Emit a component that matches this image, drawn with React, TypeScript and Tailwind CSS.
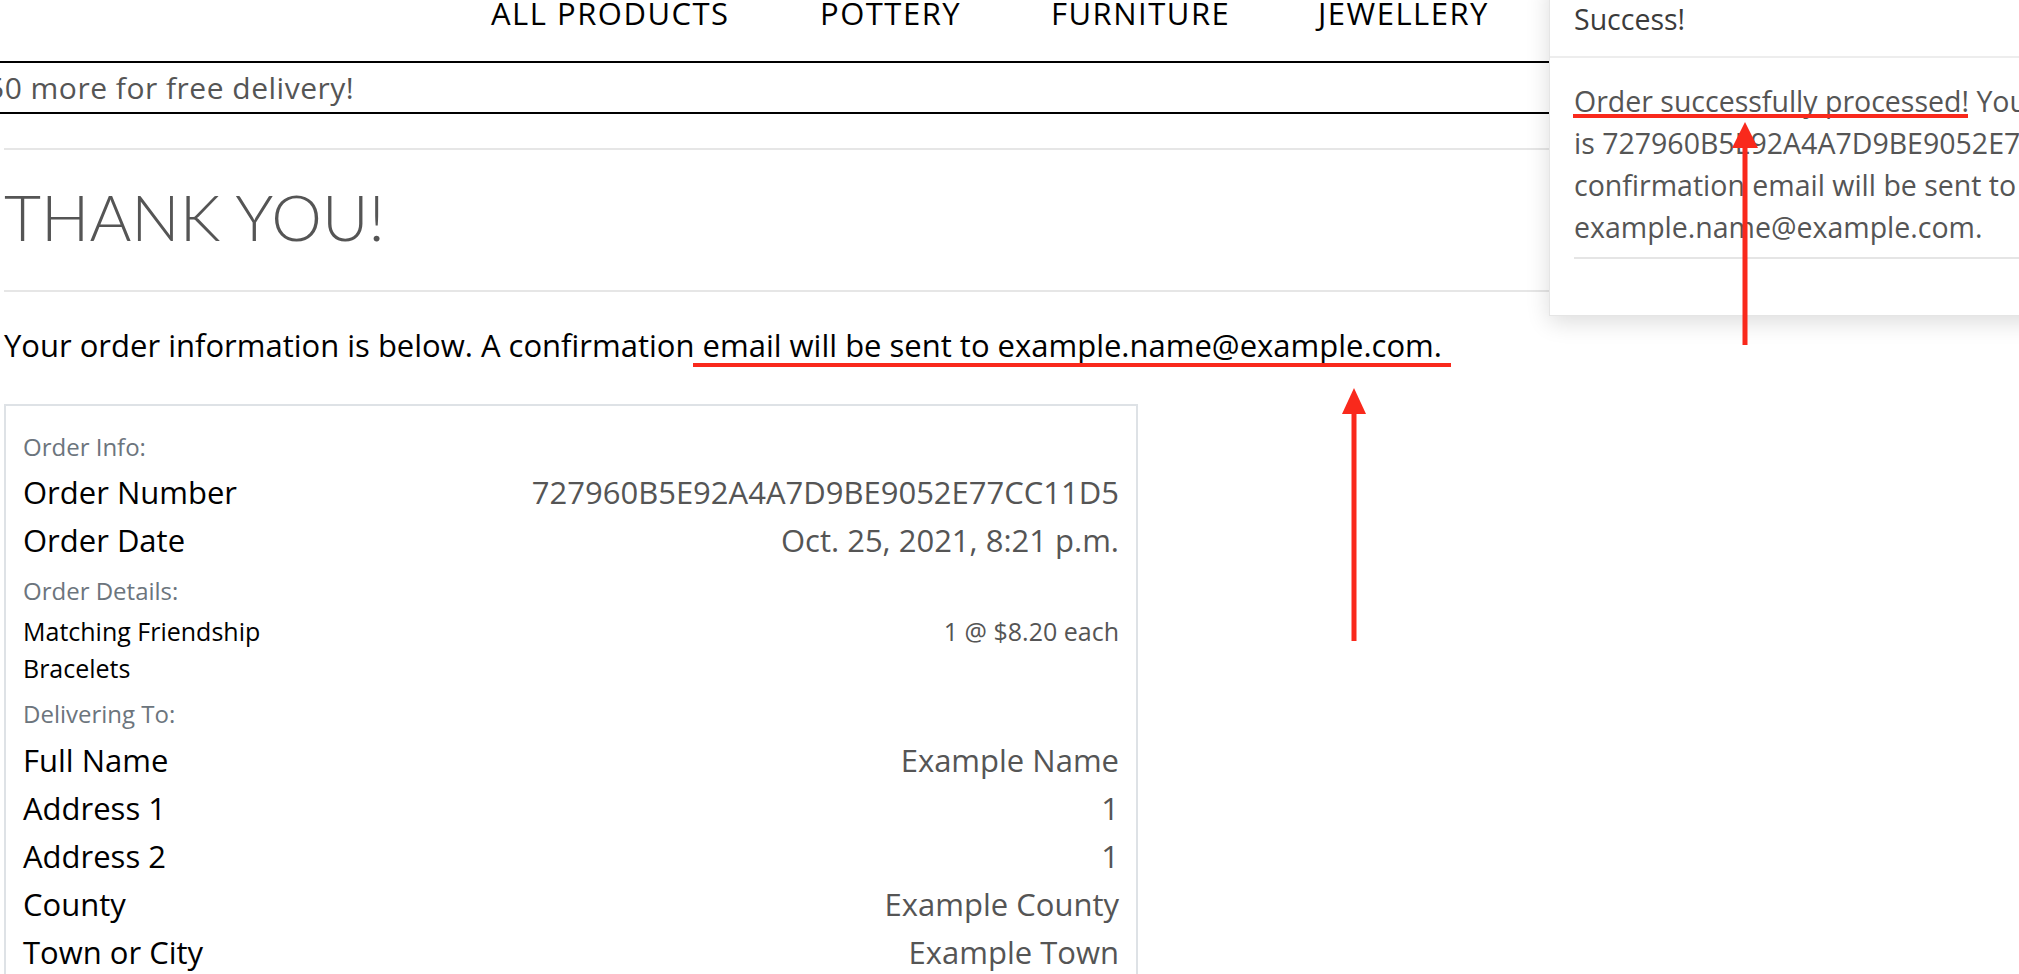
const navItems = [
  { label: "All Products", w: "w-[329px]" },
  { label: "Pottery", w: "w-[231px]" },
  { label: "Furniture", w: "w-[267px]" },
  { label: "Jewellery", w: "w-[220px]" },
];

const orderRows = [
  { label: "Order Number", value: "727960B5E92A4A7D9BE9052E77CC11D5" },
  { label: "Order Date", value: "Oct. 25, 2021, 8:21 p.m." },
];

const deliveryRows = [
  { label: "Full Name", value: "Example Name" },
  { label: "Address 1", value: "1" },
  { label: "Address 2", value: "1" },
  { label: "County", value: "Example County" },
  { label: "Town or City", value: "Example Town" },
];

function InfoRow({ label, value }: { label: string; value: string }) {
  return (
    <div className="flex justify-between h-[48px] leading-[48px] text-[31px]">
      <span className="text-black">{label}</span>
      <span className="text-[#555]">{value}</span>
    </div>
  );
}

function Annotations() {
  // red marker strokes drawn over the screenshot
  return (
    <svg className="absolute inset-0 pointer-events-none" width="2019" height="974">
      <rect x="693" y="363" width="758" height="4" fill="#f9291c" />
      <polygon points="1354,388 1342,414 1366,414" fill="#f9291c" />
      <rect x="1351.5" y="410" width="5" height="231" fill="#f9291c" />
      <rect x="1573" y="114" width="395" height="4" fill="#f9291c" />
      <polygon points="1745,122 1732,148 1758,148" fill="#f9291c" />
      <rect x="1742.5" y="145" width="5" height="200" fill="#f9291c" />
    </svg>
  );
}

function Toast() {
  return (
    <div className="absolute left-[1549px] top-[-20px] w-[720px] bg-white border border-black/10 shadow-[0_6px_22px_rgba(0,0,0,0.14)]">
      <div className="h-[77px] pt-[19px] px-[24px] border-b-2 border-[#ededed] text-[28.5px] leading-[38px] text-[#3b3b3b]">
        Success!
      </div>
      <div className="px-[24px] pt-[22px] pb-[56px] text-[28.5px] leading-[42px] text-[#555]">
        <p className="whitespace-nowrap">
          Order successfully processed! Your order number
          <br />
          is 727960B5E92A4A7D9BE9052E77CC11D5. A
          <br />
          confirmation email will be sent to
          <br />
          example.name@example.com.
        </p>
        <hr className="mt-[9px] border-t-2 border-[#e5e5e5]" />
      </div>
    </div>
  );
}

export default function App() {
  return (
    <div className="relative w-[2019px] h-[974px] overflow-hidden bg-white font-['Open_Sans',sans-serif]">
      <nav className="h-[63px] border-b-2 border-black flex pl-[491px]">
        {navItems.map((item) => (
          <a key={item.label} className={`${item.w} shrink-0 uppercase text-[31px] leading-[26px] tracking-[1.5px] text-black whitespace-nowrap`}>
            {item.label}
          </a>
        ))}
      </nav>
      <div className="h-[51px] border-b-2 border-black overflow-hidden">
        <p className="ml-[-13px] whitespace-nowrap text-[30px] leading-[49px] tracking-[0.5px] text-[#555]">
          50 more for free delivery!
        </p>
      </div>

      <main className="pl-[4px]">
        <hr className="mt-[34px] border-t-2 border-[#e6e6e6]" />
        <h1 className="mt-[29px] h-[76px] leading-[76px] font-['Lato',sans-serif] font-light text-[64px] text-[#555]">
          THANK YOU!
        </h1>
        <hr className="mt-[35px] border-t-2 border-[#e6e6e6]" />
        <p className="mt-[30px] text-[31px] leading-[46px] text-black whitespace-nowrap">
          Your order information is below. A confirmation email will be sent to example.name@example.com.
        </p>

        <div className="mt-[36px] w-[1134px] border-2 border-[#dee2e6] px-[17px] pt-[20px] pb-[20px]">
          <div className="h-[42px] leading-[42px] text-[24px] text-[#6c757d]">Order Info:</div>
          {orderRows.map((r) => (
            <InfoRow key={r.label} {...r} />
          ))}
          <div className="mt-[5px] h-[44px] leading-[44px] text-[24px] text-[#6c757d]">Order Details:</div>
          <div className="flex justify-between text-[25px] leading-[37px]">
            <span className="w-[270px] text-black">Matching Friendship Bracelets</span>
            <span className="text-[#555]">1 @ $8.20 each</span>
          </div>
          <div className="mt-[5px] h-[44px] leading-[44px] text-[24px] text-[#6c757d]">Delivering To:</div>
          {deliveryRows.map((r) => (
            <InfoRow key={r.label} {...r} />
          ))}
        </div>
      </main>

      <Toast />
      <Annotations />
    </div>
  );
}
